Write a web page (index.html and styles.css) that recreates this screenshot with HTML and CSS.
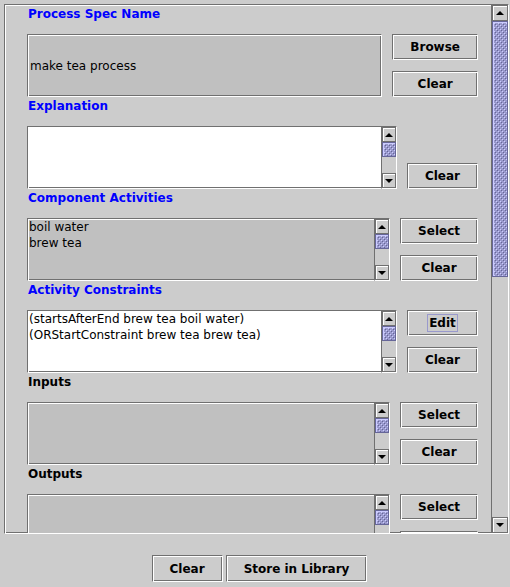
FILE: index.html
```html
<!DOCTYPE html>
<html>
<head>
<meta charset="utf-8">
<link rel="stylesheet" href="styles.css">
</head>
<body>
<div class="pane etched">
  <div class="viewport">
    <div class="sec">
      <div class="label blue">Process Spec Name</div>
      <div class="row">
        <div class="field gray etched center"><span class="txt">make tea process</span></div>
        <div class="btns">
          <button class="btn etched">Browse</button>
          <button class="btn etched">Clear</button>
        </div>
      </div>
    </div>

    <div class="sec">
      <div class="label blue">Explanation</div>
      <div class="row">
        <div class="field white etched">
          <div class="lines"></div>
          <div class="sb sb-small">
            <div class="arr up"></div>
            <div class="thumb thumb-small"></div>
            <div class="track"></div>
            <div class="arr down"></div>
          </div>
        </div>
        <div class="btns">
          <span class="btn-slot"></span>
          <button class="btn etched">Clear</button>
        </div>
      </div>
    </div>

    <div class="sec">
      <div class="label blue">Component Activities</div>
      <div class="row">
        <div class="field gray etched">
          <div class="lines">
            <div class="line">boil water</div>
            <div class="line">brew tea</div>
          </div>
          <div class="sb sb-small">
            <div class="arr up"></div>
            <div class="thumb thumb-small"></div>
            <div class="track"></div>
            <div class="arr down"></div>
          </div>
        </div>
        <div class="btns">
          <button class="btn etched">Select</button>
          <button class="btn etched">Clear</button>
        </div>
      </div>
    </div>

    <div class="sec">
      <div class="label blue">Activity Constraints</div>
      <div class="row">
        <div class="field white etched">
          <div class="lines">
            <div class="line">(startsAfterEnd brew tea boil water)</div>
            <div class="line">(ORStartConstraint brew tea brew tea)</div>
          </div>
          <div class="sb sb-small">
            <div class="arr up"></div>
            <div class="thumb thumb-small"></div>
            <div class="track"></div>
            <div class="arr down"></div>
          </div>
        </div>
        <div class="btns">
          <button class="btn etched"><span class="focus">Edit</span></button>
          <button class="btn etched">Clear</button>
        </div>
      </div>
    </div>

    <div class="sec">
      <div class="label">Inputs</div>
      <div class="row">
        <div class="field gray etched">
          <div class="lines"></div>
          <div class="sb sb-small">
            <div class="arr up"></div>
            <div class="thumb thumb-small"></div>
            <div class="track"></div>
            <div class="arr down"></div>
          </div>
        </div>
        <div class="btns">
          <button class="btn etched">Select</button>
          <button class="btn etched">Clear</button>
        </div>
      </div>
    </div>

    <div class="sec">
      <div class="label">Outputs</div>
      <div class="row">
        <div class="field gray etched">
          <div class="lines"></div>
          <div class="sb sb-small">
            <div class="arr up"></div>
            <div class="thumb thumb-small"></div>
            <div class="track"></div>
            <div class="arr down"></div>
          </div>
        </div>
        <div class="btns">
          <button class="btn etched">Select</button>
          <button class="btn etched">Clear</button>
        </div>
      </div>
    </div>
  </div>
  <div class="sb sb-main">
    <div class="arr arr-main up"></div>
    <div class="thumb thumb-main"></div>
    <div class="track"></div>
    <div class="arr arr-main down"></div>
  </div>
</div>

<div class="footer">
  <button class="btn etched btn-foot">Clear</button>
  <button class="btn etched btn-foot">Store in Library</button>
</div>
</body>
</html>
```

FILE: styles.css
```css
* { box-sizing: border-box; }

html, body {
  margin: 0;
  padding: 0;
}

body {
  width: 510px;
  height: 587px;
  overflow: hidden;
  background: #cccccc;
  font-family: "DejaVu Sans", "Liberation Sans", sans-serif;
  font-size: 12px;
  color: #000;
}

.etched {
  border: 1px solid;
  border-color: #707070 #ffffff #ffffff #707070;
  box-shadow: inset 1px 1px 0 #ffffff, inset -1px -1px 0 #707070;
}

.pane {
  margin: 4px 0 0 4px;
  width: 505px;
  height: 530px;
  display: flex;
}

.viewport {
  flex: 1;
  overflow: hidden;
  padding: 0 13px 0 22px;
}

.label {
  height: 29px;
  padding: 2px 0 0 1px;
  line-height: 15px;
  font-weight: bold;
  color: #000;
}

.label.blue { color: #0000ff; }

.row {
  display: flex;
  gap: 10px;
  height: 63px;
}

.field {
  flex: 1;
  display: flex;
  min-width: 0;
}

.field.gray { background: #c0c0c0; }
.field.white { background: #ffffff; }

.field.center {
  align-items: center;
  padding-left: 2px;
}

.txt { line-height: 16px; }

.lines {
  flex: 1;
  padding: 0 0 0 1px;
  line-height: 16px;
  white-space: nowrap;
  overflow: hidden;
}

.btns {
  display: flex;
  flex-direction: column;
  justify-content: space-between;
}

.btn {
  height: 26px;
  min-width: 70px;
  padding: 0 17px;
  margin: 0;
  background: #cccccc;
  font-family: "DejaVu Sans", "Liberation Sans", sans-serif;
  font-size: 12px;
  font-weight: bold;
  color: #000;
  line-height: 14px;
  white-space: nowrap;
}

.btn-slot { height: 26px; }

.focus {
  outline: 1px solid #9999cc;
  outline-offset: 1px;
}

/* scrollbars */
.sb {
  display: flex;
  flex-direction: column;
  background: #cccccc;
  flex: none;
}

.sb-small {
  width: 16px;
  margin: -1px -1px -1px 0;
  border-left: 1px solid #707070;
  border-top: 1px solid #707070;
  border-bottom: 1px solid #ffffff;
  border-right: 1px solid #ffffff;
}

.sb-main {
  width: 17px;
  border-left: 1px solid #707070;
}

.arr {
  flex: none;
  height: 15px;
  background: #cccccc;
  border: 1px solid #707070;
  box-shadow: inset 1px 1px 0 #ffffff;
  display: flex;
  align-items: center;
  justify-content: center;
}

.arr-main { height: 16px; }

.arr::before {
  content: "";
  width: 0;
  height: 0;
  border-left: 4px solid transparent;
  border-right: 4px solid transparent;
}

.arr.up::before { border-bottom: 4px solid #000; }
.arr.down::before { border-top: 4px solid #000; }

.thumb {
  flex: none;
  border: 1px solid #666699;
  background-color: #9999cc;
  background-image:
    conic-gradient(at 1px 1px, transparent 75%, #ccccff 0),
    conic-gradient(at 1px 1px, transparent 75%, #ccccff 0),
    conic-gradient(at 1px 1px, transparent 75%, #666699 0),
    conic-gradient(at 1px 1px, transparent 75%, #666699 0);
  background-size: 4px 4px;
  background-position: 1px 1px, 3px 3px, 2px 2px, 4px 4px;
  box-shadow: inset 1px 1px 0 #ccccff;
}

.thumb-small { height: 15px; }
.thumb-main { height: 256px; }

.track {
  flex: 1;
  background: #cccccc;
}

.sb-small .track {
  border-left: 1px solid #707070;
  margin-left: -1px;
}

.footer {
  display: flex;
  justify-content: center;
  gap: 3px;
  padding: 21px 0 0 9px;
}

.btn-foot { height: 27px; }
```
